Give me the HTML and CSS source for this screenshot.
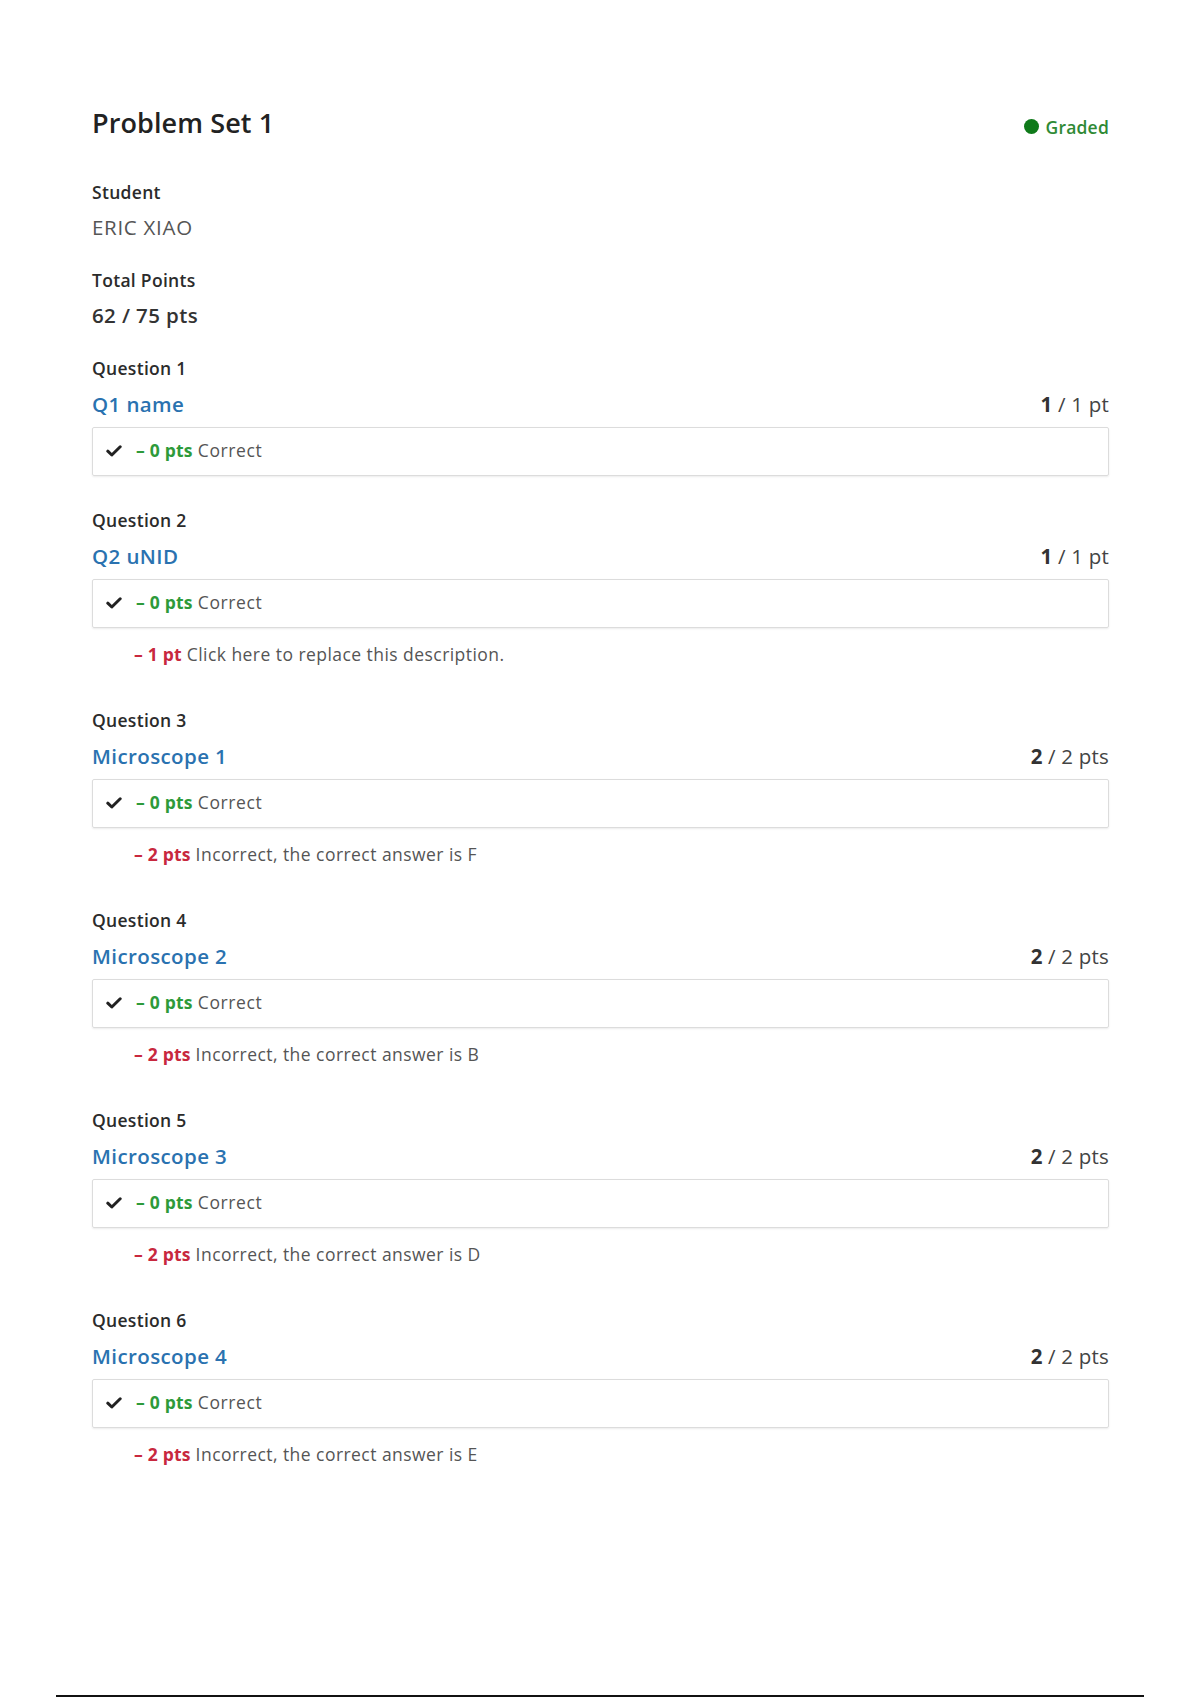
FILE: index.html
```html
<!DOCTYPE html>
<html lang="en">
<head>
<meta charset="utf-8">
<title>Problem Set 1</title>
<link rel="stylesheet" href="styles.css">
</head>
<body>
<div class="page">
  <main class="sheet">
    <header class="sheet-head">
      <h1 class="sheet-title">Problem Set 1</h1>
      <div class="status"><span class="status-dot"></span>Graded</div>
    </header>

    <section class="field">
      <div class="field-label">Student</div>
      <div class="field-value">ERIC XIAO</div>
    </section>

    <section class="field field-last">
      <div class="field-label">Total Points</div>
      <div class="field-value strong">62 / 75 pts</div>
    </section>

    <section class="question">
      <div class="q-label">Question 1</div>
      <div class="q-head"><span class="q-title">Q1 name</span><span class="q-score"><b>1</b> / 1 pt</span></div>
      <div class="rubric-box"><svg class="check" viewBox="0 0 16 12" aria-hidden="true"><polyline points="1.8,6.2 5.8,10 14.2,1.8"/></svg><span class="pts good">– 0 pts</span> Correct</div>
    </section>

    <section class="question">
      <div class="q-label">Question 2</div>
      <div class="q-head"><span class="q-title">Q2 uNID</span><span class="q-score"><b>1</b> / 1 pt</span></div>
      <div class="rubric-box"><svg class="check" viewBox="0 0 16 12" aria-hidden="true"><polyline points="1.8,6.2 5.8,10 14.2,1.8"/></svg><span class="pts good">– 0 pts</span> Correct</div>
      <div class="rubric-item"><span class="pts bad">– 1 pt</span> Click here to replace this description.</div>
    </section>

    <section class="question">
      <div class="q-label">Question 3</div>
      <div class="q-head"><span class="q-title">Microscope 1</span><span class="q-score"><b>2</b> / 2 pts</span></div>
      <div class="rubric-box"><svg class="check" viewBox="0 0 16 12" aria-hidden="true"><polyline points="1.8,6.2 5.8,10 14.2,1.8"/></svg><span class="pts good">– 0 pts</span> Correct</div>
      <div class="rubric-item"><span class="pts bad">– 2 pts</span> Incorrect, the correct answer is F</div>
    </section>

    <section class="question">
      <div class="q-label">Question 4</div>
      <div class="q-head"><span class="q-title">Microscope 2</span><span class="q-score"><b>2</b> / 2 pts</span></div>
      <div class="rubric-box"><svg class="check" viewBox="0 0 16 12" aria-hidden="true"><polyline points="1.8,6.2 5.8,10 14.2,1.8"/></svg><span class="pts good">– 0 pts</span> Correct</div>
      <div class="rubric-item"><span class="pts bad">– 2 pts</span> Incorrect, the correct answer is B</div>
    </section>

    <section class="question">
      <div class="q-label">Question 5</div>
      <div class="q-head"><span class="q-title">Microscope 3</span><span class="q-score"><b>2</b> / 2 pts</span></div>
      <div class="rubric-box"><svg class="check" viewBox="0 0 16 12" aria-hidden="true"><polyline points="1.8,6.2 5.8,10 14.2,1.8"/></svg><span class="pts good">– 0 pts</span> Correct</div>
      <div class="rubric-item"><span class="pts bad">– 2 pts</span> Incorrect, the correct answer is D</div>
    </section>

    <section class="question">
      <div class="q-label">Question 6</div>
      <div class="q-head"><span class="q-title">Microscope 4</span><span class="q-score"><b>2</b> / 2 pts</span></div>
      <div class="rubric-box"><svg class="check" viewBox="0 0 16 12" aria-hidden="true"><polyline points="1.8,6.2 5.8,10 14.2,1.8"/></svg><span class="pts good">– 0 pts</span> Correct</div>
      <div class="rubric-item"><span class="pts bad">– 2 pts</span> Incorrect, the correct answer is E</div>
    </section>
  </main>
  <div class="page-rule"></div>
</div>
</body>
</html>
```

FILE: styles.css
```css
html, body {
  margin: 0;
  padding: 0;
  background: #ffffff;
}

body {
  font-family: "Open Sans", "Noto Sans", "DejaVu Sans", sans-serif;
  color: #333333;
}

.page {
  min-height: 1697px;
  display: flex;
  flex-direction: column;
}

.sheet {
  flex: 1;
  width: 1017px;
  margin-left: 92px;
  padding-top: 105px;
}

.sheet-head {
  display: flex;
  justify-content: space-between;
  align-items: center;
  margin-bottom: 39px;
}

.sheet-title {
  margin: 0;
  font-size: 27px;
  line-height: 36px;
  font-weight: 600;
  color: #222222;
  letter-spacing: 0.1px;
}

.status {
  display: flex;
  align-items: center;
  gap: 7px;
  font-size: 17.5px;
  font-weight: 600;
  color: #2f8a35;
  margin-top: 7px;
  letter-spacing: 0.2px;
}

.status-dot {
  width: 15px;
  height: 15px;
  border-radius: 50%;
  background: #0f7a1a;
}

.field {
  margin-bottom: 27px;
}

.field-label,
.q-label {
  font-size: 17.5px;
  line-height: 24px;
  font-weight: 600;
  color: #2b2b2b;
  letter-spacing: 0.3px;
}

.field-value {
  margin-top: 9px;
  font-size: 20.5px;
  line-height: 28px;
  color: #555555;
  letter-spacing: 0.7px;
}

.field-value.strong {
  font-weight: 600;
  color: #333333;
  letter-spacing: 0.4px;
}

.question {
  margin-bottom: 32px;
}

.question:has(.rubric-item) {
  margin-bottom: 40px;
}

.q-head {
  margin-top: 10px;
  display: flex;
  justify-content: space-between;
  align-items: baseline;
  line-height: 28px;
}

.q-title {
  font-size: 20.5px;
  font-weight: 600;
  color: #2a72b0;
  letter-spacing: 0.4px;
}

.q-score {
  font-size: 20.5px;
  color: #444444;
  letter-spacing: 0.2px;
}

.q-score b {
  font-weight: 700;
  color: #333333;
}

.rubric-box {
  margin-top: 9px;
  height: 49px;
  box-sizing: border-box;
  border: 1px solid #dcdcdc;
  border-radius: 2px;
  box-shadow: 0 1px 2px rgba(0, 0, 0, 0.08);
  display: flex;
  align-items: center;
  padding-left: 13px;
  padding-bottom: 3px;
  font-size: 17.5px;
  color: #555555;
  white-space: pre;
  letter-spacing: 0.6px;
}

.check {
  width: 16px;
  height: 12px;
  margin-right: 14px;
  margin-top: 2px;
  fill: none;
  stroke: #222222;
  stroke-width: 3;
  stroke-linecap: round;
  stroke-linejoin: round;
}

.pts {
  font-weight: 700;
  letter-spacing: 0.2px;
}

.good {
  color: #2e9a3a;
}

.bad {
  color: #c8283e;
}

.rubric-item {
  margin-top: 12px;
  padding-left: 42px;
  font-size: 17.5px;
  line-height: 28px;
  color: #555555;
  white-space: pre;
  letter-spacing: 0.45px;
}

.page-rule {
  height: 2px;
  margin: 0 56px 0 56px;
  background: #111111;
}
```
